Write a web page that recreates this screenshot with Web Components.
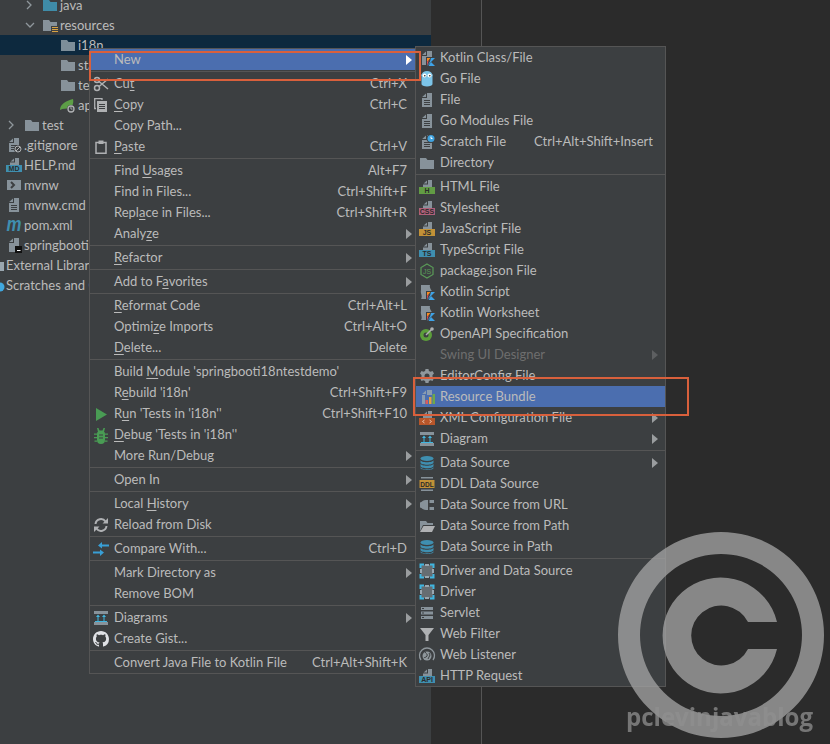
<!DOCTYPE html>
<html>
<head>
<meta charset="utf-8">
<title>New Resource Bundle</title>
<style>
  html, body { margin: 0; height: 100%; background: #2b2b2b; overflow: hidden; }
  body { font: 13px Lato, "Noto Sans", sans-serif; color: #bbb; }
  #main-menu { left: 89px; top: 48px; width: 327px; --item-pad: 8px; }
  #new-menu { left: 415px; top: 46px; width: 251px; --item-pad: 12px; }
  u { text-underline-offset: 2px; text-decoration-thickness: 1px; }
</style>
</head>
<body>
<ide-window>
  <project-tree slot="tree">
    <tree-row x="60" arrow="right" icon="folder-src">java</tree-row>
    <tree-row x="60" arrow="down" icon="folder-res">resources</tree-row>
    <tree-row x="78" icon="folder" selected>i18n</tree-row>
    <tree-row x="78" icon="folder">static</tree-row>
    <tree-row x="78" icon="folder">templates</tree-row>
    <tree-row x="78" icon="spring">application.properties</tree-row>
    <tree-row x="42" arrow="right" icon="folder">test</tree-row>
    <tree-row x="24" icon="ignore">.gitignore</tree-row>
    <tree-row x="24" icon="md">HELP.md</tree-row>
    <tree-row x="24" icon="shell">mvnw</tree-row>
    <tree-row x="24" icon="file">mvnw.cmd</tree-row>
    <tree-row x="24" icon="maven">pom.xml</tree-row>
    <tree-row x="24" icon="iml">springbooti18ntestdemo.iml</tree-row>
    <tree-row x="6" icon="libs">External Libraries</tree-row>
    <tree-row x="6" icon="scratch-root">Scratches and Consoles</tree-row>
  </project-tree>
</ide-window>

<ide-menu id="main-menu">
  <menu-item arrow selected>New</menu-item>
  <menu-sep></menu-sep>
  <menu-item icon="cut" shortcut="Ctrl+X">Cu<u>t</u></menu-item>
  <menu-item icon="copy" shortcut="Ctrl+C"><u>C</u>opy</menu-item>
  <menu-item>Copy Path...</menu-item>
  <menu-item icon="paste" shortcut="Ctrl+V"><u>P</u>aste</menu-item>
  <menu-sep></menu-sep>
  <menu-item shortcut="Alt+F7">Find <u>U</u>sages</menu-item>
  <menu-item shortcut="Ctrl+Shift+F">Find in Files...</menu-item>
  <menu-item shortcut="Ctrl+Shift+R">Repl<u>a</u>ce in Files...</menu-item>
  <menu-item arrow>Analy<u>z</u>e</menu-item>
  <menu-sep></menu-sep>
  <menu-item arrow><u>R</u>efactor</menu-item>
  <menu-sep></menu-sep>
  <menu-item arrow>Add to F<u>a</u>vorites</menu-item>
  <menu-sep></menu-sep>
  <menu-item shortcut="Ctrl+Alt+L"><u>R</u>eformat Code</menu-item>
  <menu-item shortcut="Ctrl+Alt+O">Optimi<u>z</u>e Imports</menu-item>
  <menu-item shortcut="Delete"><u>D</u>elete...</menu-item>
  <menu-sep></menu-sep>
  <menu-item>Build <u>M</u>odule 'springbooti18ntestdemo'</menu-item>
  <menu-item shortcut="Ctrl+Shift+F9">R<u>e</u>build 'i18n'</menu-item>
  <menu-item icon="run" shortcut="Ctrl+Shift+F10">R<u>u</u>n 'Tests in 'i18n''</menu-item>
  <menu-item icon="bug"><u>D</u>ebug 'Tests in 'i18n''</menu-item>
  <menu-item arrow>More Run/Debug</menu-item>
  <menu-sep></menu-sep>
  <menu-item arrow>Open In</menu-item>
  <menu-sep></menu-sep>
  <menu-item arrow>Local <u>H</u>istory</menu-item>
  <menu-item icon="reload">Reload from Disk</menu-item>
  <menu-sep></menu-sep>
  <menu-item icon="compare" shortcut="Ctrl+D">Compare With...</menu-item>
  <menu-sep></menu-sep>
  <menu-item arrow>Mark Directory as</menu-item>
  <menu-item>Remove BOM</menu-item>
  <menu-sep></menu-sep>
  <menu-item icon="diagram" arrow>Diagrams</menu-item>
  <menu-item icon="github">Create Gist...</menu-item>
  <menu-sep></menu-sep>
  <menu-item shortcut="Ctrl+Alt+Shift+K">Convert Java File to Kotlin File</menu-item>
</ide-menu>

<ide-menu id="new-menu">
  <menu-item icon="kotlin-file">Kotlin Class/File</menu-item>
  <menu-item icon="go">Go File</menu-item>
  <menu-item icon="file">File</menu-item>
  <menu-item icon="file">Go Modules File</menu-item>
  <menu-item icon="scratch" shortcut="Ctrl+Alt+Shift+Insert">Scratch File</menu-item>
  <menu-item icon="folder">Directory</menu-item>
  <menu-sep></menu-sep>
  <menu-item icon="html">HTML File</menu-item>
  <menu-item icon="css">Stylesheet</menu-item>
  <menu-item icon="js">JavaScript File</menu-item>
  <menu-item icon="ts">TypeScript File</menu-item>
  <menu-item icon="npm">package.json File</menu-item>
  <menu-item icon="kotlin-script">Kotlin Script</menu-item>
  <menu-item icon="kotlin-script">Kotlin Worksheet</menu-item>
  <menu-item icon="openapi">OpenAPI Specification</menu-item>
  <menu-item arrow disabled>Swing UI Designer</menu-item>
  <menu-item icon="gear">EditorConfig File</menu-item>
  <menu-item icon="bundle" selected>Resource Bundle</menu-item>
  <menu-item icon="xml" arrow>XML Configuration File</menu-item>
  <menu-item icon="diagram" arrow>Diagram</menu-item>
  <menu-sep></menu-sep>
  <menu-item icon="db" arrow>Data Source</menu-item>
  <menu-item icon="ddl">DDL Data Source</menu-item>
  <menu-item icon="plug">Data Source from URL</menu-item>
  <menu-item icon="folder-open">Data Source from Path</menu-item>
  <menu-item icon="db">Data Source in Path</menu-item>
  <menu-sep></menu-sep>
  <menu-item icon="driver">Driver and Data Source</menu-item>
  <menu-item icon="driver">Driver</menu-item>
  <menu-item icon="servlet">Servlet</menu-item>
  <menu-item icon="filter">Web Filter</menu-item>
  <menu-item icon="listener">Web Listener</menu-item>
  <menu-item icon="api">HTTP Request</menu-item>
</ide-menu>

<mark-box style="left:89px;top:51px;width:328px;height:26px"></mark-box>
<mark-box style="left:413px;top:377px;width:272px;height:35px"></mark-box>
<copy-mark></copy-mark>

<script>
// page outline shared by every "file" icon, cut corner top left
const PAGE = '<path fill="#9aa7b0" fill-opacity=".8" d="M8 1h5v14H3V6h5z"/><path fill="#9aa7b0" fill-opacity=".8" d="M7 1.500V5H3.200z"/>';
const HALF_PAGE = '<path fill="#9aa7b0" fill-opacity=".8" d="M9 1h4v7H4V5.500h5z"/><path fill="#9aa7b0" fill-opacity=".8" d="M8 1.500v3H4.600z"/>';
const LINES = '<path fill="#3c3f41" d="M5 8h6v1H5zM5 10h6v1H5zM5 12h6v1H5z"/>';
const FOLDER = '<path fill="#9aa7b0" fill-opacity=".8" d="M1 3h6l1.500 2H15v9H1z"/>';
const KOTLIN = '<path fill="#f88a1d" d="M8 8h3.500L8 12z"/><path fill="#e44857" d="M8 12l1.800-2L8 16z"/><path fill="#3ea3e8" d="M12 8h4l-8 8 3-4.500z"/><path fill="#3ea3e8" d="M12 12l4 4H9.500z"/>';
const badge = (color, label, size = 7) => `${HALF_PAGE}<rect x="0" y="8" width="16" height="7" fill="${color}"/>
  <text x="8" y="14" text-anchor="middle" font-family="Liberation Sans" font-weight="700" font-size="${size}" fill="#2b2b2b">${label}</text>`;
const DB = `<g fill="#3f8fb0"><ellipse cx="8" cy="3.500" rx="6.500" ry="2.500"/><path d="M1.500 5c0 3 13 3 13 0v2.500c0 3-13 3-13 0zM1.500 8.500c0 3 13 3 13 0V11c0 3-13 3-13 0z"/><path d="M1.500 12c0 3 13 3 13 0v1c0 2.500-13 2.500-13 0z"/></g>`;
const DIAGRAM = '<path fill="#9aa7b0" fill-opacity=".8" d="M1 1h14v3H1zM1 12h14v3H1z"/><path stroke="#40b6e0" fill="none" d="M5 11V6M11 11V6"/><path fill="#40b6e0" d="M5 4.500L7 7H3zM11 4.500L13 7H9z"/><path fill="#40b6e0" d="M2 11h12v1H2z"/>';

const ICONS = {
  "folder": FOLDER,
  "folder-src": '<path fill="#40b6e0" fill-opacity=".65" d="M1 3h6l1.500 2H15v9H1z"/>',
  "folder-res": FOLDER + '<path fill="#3c3f41" d="M9 9h7v7H9z"/><path fill="#d9a343" d="M10 10h6v1h-6zM10 12h6v1h-6zM10 14h6v1h-6z"/>',
  "spring": '<path fill="#5c9e46" d="M0 13C0 7 6 4 13 2c1 4-.5 8-4 9-3 1-6 0-9 2z"/><circle cx="11" cy="12" r="4" fill="#3c3f41"/><circle cx="11" cy="12" r="3" fill="none" stroke="#afb1b3" stroke-width="1.300"/><path stroke="#afb1b3" d="M11 10v2h1.500"/>',
  "ignore": PAGE + LINES + '<circle cx="12" cy="12" r="4" fill="#3c3f41"/><circle cx="12" cy="12" r="3" fill="none" stroke="#afb1b3"/><path stroke="#afb1b3" d="M10 14l4-4"/>',
  "md": badge("#3f8fb0", "MD"),
  "shell": '<path fill="#9aa7b0" fill-opacity=".8" d="M1 3h14v10H1z"/><path fill="none" stroke="#3c3f41" stroke-width="2" d="M5 5l3 3-3 3"/>',
  "file": PAGE + LINES,
  "maven": '<text x="8" y="14" text-anchor="middle" font-family="Liberation Sans" font-weight="700" font-style="italic" font-size="20" textLength="15" lengthAdjust="spacingAndGlyphs" fill="#3f8fb0">m</text>',
  "iml": PAGE + '<rect x="9" y="9" width="7" height="7" fill="#111"/><rect x="11" y="13" width="3.500" height="1" fill="#fff"/>',
  "libs": '<path fill="#9aa7b0" d="M10 5h6v9h-6z"/>',
  "scratch-root": '<circle cx="12" cy="10" r="4.500" fill="#40a8e0"/>',
  "cut": '<g fill="none" stroke="#afb1b3" stroke-width="1.500"><circle cx="4" cy="12" r="2.500"/><circle cx="4" cy="4" r="2.500"/><path d="M6 5.500L15 13M6 10.500L15 3"/></g>',
  "copy": '<path fill="none" stroke="#afb1b3" stroke-width="1.300" d="M3 11.500H1.700V1.700H9V3"/><path fill="#afb1b3" d="M4 4h10v11H4z"/><path fill="#3c3f41" d="M6 7h6v1H6zM6 9h6v1H6zM6 11h6v1H6z"/>',
  "paste": '<path fill="none" stroke="#afb1b3" stroke-width="1.500" d="M3 3.500h10v10.800H3z"/><path fill="#afb1b3" d="M5.500 1.500h5V5h-5z"/>',
  "run": '<path fill="#499c54" d="M3 2l11 6.500L3 15z"/>',
  "bug": '<g fill="#499c54"><path d="M4.500 5h7A4 4 0 0 1 12 7v6a4 4 0 0 1-8 0V7a4 4 0 0 1 .5-2z"/><path d="M4 1h1.500l1 2.500h3l1-2.500H12l-1 4H5zM1 6.500h3v1.300H1zM12 6.500h3v1.300h-3zM1 10h3v1.300H1zM12 10h3v1.300h-3zM1.500 13.500H4v1.300H1.500zM12 13.500h2.500v1.300H12z"/></g><path fill="#3c3f41" d="M6 7.500h4v1H6zM6 10.500h4v1H6z"/>',
  "reload": '<g fill="none" stroke="#afb1b3" stroke-width="2"><path d="M2.500 7A5.500 5.500 0 0 1 12.500 4.500"/><path d="M13.500 9A5.500 5.500 0 0 1 3.500 11.500"/></g><path fill="#afb1b3" d="M9.500 6.500H15V1zM6.500 9.500H1V15z"/>',
  "compare": '<path fill="#389fd6" d="M9 7.500V1L5 4.500zM9 3.500h7v2H9zM7 8.500V15l4-3.500zM0 10.500h7v2H0z"/>',
  "diagram": DIAGRAM,
  "github": '<path fill="#dfe1e5" d="M8 0C3.580 0 0 3.580 0 8c0 3.540 2.290 6.530 5.470 7.590.4.070.55-.17.55-.38 0-.19-.01-.82-.01-1.490-2.010.37-2.530-.49-2.690-.94-.09-.23-.48-.94-.82-1.130-.28-.15-.68-.52-.01-.53.63-.01 1.080.58 1.230.82.72 1.210 1.870.87 2.330.66.07-.52.28-.87.51-1.070-1.780-.2-3.640-.89-3.640-3.950 0-.87.31-1.590.82-2.150-.08-.2-.36-1.020.08-2.120 0 0 .67-.21 2.200.82.64-.18 1.320-.27 2-.27.68 0 1.360.09 2 .27 1.530-1.040 2.200-.82 2.200-.82.44 1.100.16 1.920.08 2.120.51.56.82 1.270.82 2.150 0 3.070-1.870 3.750-3.650 3.950.29.25.54.73.54 1.480 0 1.070-.01 1.930-.01 2.200 0 .21.15.46.55.38A8.013 8.013 0 0016 8c0-4.420-3.580-8-8-8z"/>',
  "kotlin-file": PAGE + '<path fill="#3c3f41" d="M7 7h9v9H7z"/>' + KOTLIN,
  "go": '<path fill="#7cc4e8" d="M3 3a5 3 0 0 1 10 0c1 .5 1 1.500 .5 2V13a5.500 2.500 0 0 1-11 0V5C2 4.500 2 3.500 3 3z"/><circle cx="5.500" cy="4.500" r="2" fill="#fff"/><circle cx="10.500" cy="4.500" r="2" fill="#fff"/><circle cx="5.800" cy="4.700" r=".8" fill="#222"/><circle cx="10.800" cy="4.700" r=".8" fill="#222"/>',
  "scratch": PAGE + LINES + '<circle cx="12" cy="4.500" r="4.500" fill="#3c3f41"/><circle cx="12" cy="4.500" r="3.500" fill="#3fa3e0"/><path stroke="#fff" fill="none" d="M12 2.500v2h1.500"/>',
  "html": badge("#629c44", "H"),
  "css": badge("#b0607a", "CSS"),
  "js": badge("#c29137", "JS"),
  "ts": badge("#3f8fb0", "TS"),
  "npm": '<path fill="none" stroke="#5a9a58" stroke-width="1.200" d="M8 1l6 3.500v7L8 15l-6-3.500v-7z"/><text x="8" y="11" text-anchor="middle" font-family="Liberation Sans" font-size="7" fill="#5a9a58">JS</text>',
  "kotlin-script": '<path fill="#9aa7b0" fill-opacity=".8" d="M2 1h9c-1 3 2 5 2 7l-5 7H2c2-3-1-6 0-9z"/><path fill="#3c3f41" d="M7 7h9v9H7z"/>' + KOTLIN,
  "openapi": '<circle cx="7" cy="9" r="6" fill="#5c9e3a"/><circle cx="7" cy="9" r="2.500" fill="#3c3f41"/><path stroke="#afb1b3" stroke-width="1.500" d="M7 9l6-6"/><circle cx="13" cy="3" r="1.800" fill="#afb1b3"/>',
  "gear": '<path fill="#8f979c" d="M6.500 1h3l.4 2 1.700.8L13.500 3l1.500 2.600-1.500 1.300v1.900l1.500 1.300L13.500 13l-1.900-.8-1.700.8-.4 2h-3l-.4-2-1.700-.8-1.900.8L1 10.100l1.500-1.300V6.900L1 5.600 2.500 3l1.900.8L6.100 3z"/><circle cx="8" cy="8" r="2.500" fill="#3c3f41"/>',
  "bundle": PAGE + '<path fill="#4b6eaf" d="M6 6h10v10H6z"/><path fill="#db5c5c" d="M6.500 11h2.500v4H6.500z"/><path fill="#e8a33d" d="M10 8h2.500v7H10z"/><path fill="#6fa84a" d="M13.500 5h2.500v10h-2.500z"/>',
  "xml": HALF_PAGE + '<rect x="0" y="8" width="16" height="7" fill="#b8562a"/><path fill="none" stroke="#e8c0a8" d="M5.500 10l-2 1.500 2 1.500M10.500 10l2 1.500-2 1.500"/>',
  "db": DB,
  "ddl": '<path fill="#9aa7b0" fill-opacity=".8" d="M2 1h12v1.500H2zM2 13.500h12V15H2z"/><rect x=".5" y="4" width="15" height="8" fill="#c29137"/><text x="8" y="10.800" text-anchor="middle" font-family="Liberation Sans" font-weight="700" font-size="6.500" fill="#2b2b2b">DDL</text>',
  "plug": '<path fill="#9aa7b0" fill-opacity=".8" d="M7 3h2v10H7C4 13 3 11 1 10.500v-5C3 5 4 3 7 3z"/><path fill="#9aa7b0" fill-opacity=".8" d="M10.500 3H15v3h-4.500zM10.500 10H15v3h-4.500z"/>',
  "folder-open": '<path fill="#9aa7b0" fill-opacity=".8" d="M1 3h6l1.500 2H14v2H4L1 13z"/><path fill="#afb1b3" d="M4.500 8H16l-3 6H1z"/>',
  "driver": '<path fill="#9aa7b0" fill-opacity=".45" d="M2 2h12v12H2z"/><g fill="none" stroke="#40b6e0" stroke-width="2"><path d="M1.500 5V1.500H5M11 1.500h3.500V5M14.500 11v3.500H11M5 14.500H1.500V11"/></g><path fill="#9aa7b0" d="M6 1h4v2H6zM6 13h4v2H6zM1 6h2v4H1zM13 6h2v4h-2z"/>',
  "servlet": '<path fill="#9aa7b0" fill-opacity=".8" d="M2 2h12v3H2zM2 6.500h12v3H2zM2 11h12v3H2z"/><path fill="#3c3f41" d="M3 3h2v1H3zM3 7.500h2v1H3zM3 12h2v1H3z"/>',
  "filter": '<path fill="#afb1b3" d="M1 2h14L9.500 9v6h-3V9z"/>',
  "listener": '<circle cx="8" cy="9" r="4.500" fill="#8f979c"/><path fill="none" stroke="#8f979c" stroke-width="1.300" d="M2 13A7.500 7.500 0 1 1 14 13"/><path fill="none" stroke="#3c3f41" d="M6 5c1 2 3 2 2 4s-3 1-3 2M10 6l1 2-2 4"/>',
  "api": badge("#3f8fb0", "API")
};

class IdeIcon extends HTMLElement {
  connectedCallback() {
    this.attachShadow({ mode: "open" }).innerHTML = `
      <style>
        :host { display: block; width: 16px; height: 16px; flex: none; }
        svg { display: block; overflow: visible; }
      </style>
      <svg width="16" height="16" viewBox="0 0 16 16">${ICONS[this.getAttribute("name")] || ""}</svg>`;
  }
}

class IdeWindow extends HTMLElement {
  constructor() {
    super();
    this.attachShadow({ mode: "open" }).innerHTML = `
      <style>
        :host { display: grid; grid-template-columns: 431px 51px 1fr; height: 744px; }
        .side { background: #3c3f41; overflow: hidden; }
        .gutter { background: #2d2d2d; border-right: 1px solid #555; }
        .editor { background: #2b2b2b; }
      </style>
      <div class="side"><slot name="tree"></slot></div>
      <div class="gutter"></div>
      <div class="editor"></div>`;
  }
}

class ProjectTree extends HTMLElement {
  constructor() {
    super();
    // first row is scrolled half out of view
    this.attachShadow({ mode: "open" }).innerHTML = `
      <style>:host { display: block; margin-top: -5px; }</style>
      <slot></slot>`;
  }
}

class TreeRow extends HTMLElement {
  connectedCallback() {
    const x = +this.getAttribute("x");
    const arrow = this.getAttribute("arrow");
    const chevron = arrow === "down" ? "M2 1l4 4 4-4" : arrow === "right" ? "M2 1l4 4-4 4" : "";
    const chevronBox = arrow === "down" ? "0 -1 12 8" : "0 -1 10 12";
    this.attachShadow({ mode: "open" }).innerHTML = `
      <style>
        :host { display: flex; align-items: center; height: 20px; white-space: nowrap; color: #bbb; }
        :host([selected]) { background: #0d293e; }
        .arrow { width: 12px; margin-right: 6px; display: flex; justify-content: center; }
        .label { margin-left: 2px; }
        svg { display: block; }
      </style>
      ${chevron ? `<span class="arrow" style="margin-left:${x - 36}px"><svg width="12" height="12" viewBox="${chevronBox}" fill="none" stroke="#8f979c" stroke-width="1.300">
        <path d="${chevron}"/></svg></span>` : ""}
      <ide-icon name="${this.getAttribute("icon")}" style="${chevron ? "" : `margin-left:${x - 18}px`}"></ide-icon>
      <span class="label"><slot></slot></span>`;
  }
}

class IdeMenu extends HTMLElement {
  constructor() {
    super();
    this.attachShadow({ mode: "open" }).innerHTML = `
      <style>
        :host { display: block; position: absolute; box-sizing: border-box; background: #3c3f41; border: 1px solid #555; }
      </style>
      <slot></slot>`;
  }
}

class MenuSep extends HTMLElement {
  constructor() {
    super();
    this.attachShadow({ mode: "open" }).innerHTML = `
      <style>
        :host { display: block; height: 3px; box-sizing: border-box; padding-top: 1px; }
        div { height: 1px; background: #555; }
      </style><div></div>`;
  }
}

class MenuItem extends HTMLElement {
  connectedCallback() {
    const icon = this.getAttribute("icon");
    const shortcut = this.getAttribute("shortcut");
    this.attachShadow({ mode: "open" }).innerHTML = `
      <style>
        :host { display: flex; align-items: center; height: 21px; padding: 0 var(--item-pad) 0 3px; color: #bbb; white-space: nowrap; }
        :host([selected]) { background: #4b6eaf; }
        :host([disabled]) { color: #6e6e6e; }
        .icon { width: 16px; height: 16px; margin-right: 5px; flex: none; }
        .label { flex: 1; margin-bottom: 2px; }
        .keys { margin-bottom: 2px; }
        .arrow { margin-right: -5px; width: 0; height: 0; border: 5px solid transparent; border-left: 6px solid #9a9d9f; border-right: 0; }
        :host([selected]) .arrow { border-left-color: #fff; }
        :host([disabled]) .arrow { border-left-color: #5d5f61; }
      </style>
      <span class="icon">${icon ? `<ide-icon name="${icon}"></ide-icon>` : ""}</span>
      <span class="label"><slot></slot></span>
      ${shortcut ? `<span class="keys">${shortcut}</span>` : ""}
      ${this.hasAttribute("arrow") ? `<span class="arrow"></span>` : ""}`;
  }
}

class MarkBox extends HTMLElement {
  constructor() {
    super();
    this.attachShadow({ mode: "open" }).innerHTML = `
      <style>:host { display: block; position: absolute; border: 2px solid #d9603c; }</style>`;
  }
}

class CopyMark extends HTMLElement {
  constructor() {
    super();
    this.attachShadow({ mode: "open" }).innerHTML = `
      <style>
        :host { position: absolute; inset: 0; display: block; pointer-events: none; }
        svg { display: block; }
        text { font: 700 25px "Open Sans", sans-serif; filter: blur(.5px); }
      </style>
      <svg width="830" height="744">
        <g fill="#a5a5a5" opacity=".76">
          <path fill-rule="evenodd" d="M721 532a103 103 0 1 0 .01 0zM721 554a81 81 0 1 1-.01 0z"/>
          <path d="M777 622A58 58 0 1 0 777 649H748A30 30 0 1 1 748 622z"/>
        </g>
        <text x="626" y="726" textLength="187" lengthAdjust="spacingAndGlyphs" fill="#909090" opacity=".75">pclevinjavablog</text>
      </svg>`;
  }
}

customElements.define("ide-icon", IdeIcon);
customElements.define("ide-window", IdeWindow);
customElements.define("project-tree", ProjectTree);
customElements.define("tree-row", TreeRow);
customElements.define("ide-menu", IdeMenu);
customElements.define("menu-sep", MenuSep);
customElements.define("menu-item", MenuItem);
customElements.define("mark-box", MarkBox);
customElements.define("copy-mark", CopyMark);
</script>
</body>
</html>
